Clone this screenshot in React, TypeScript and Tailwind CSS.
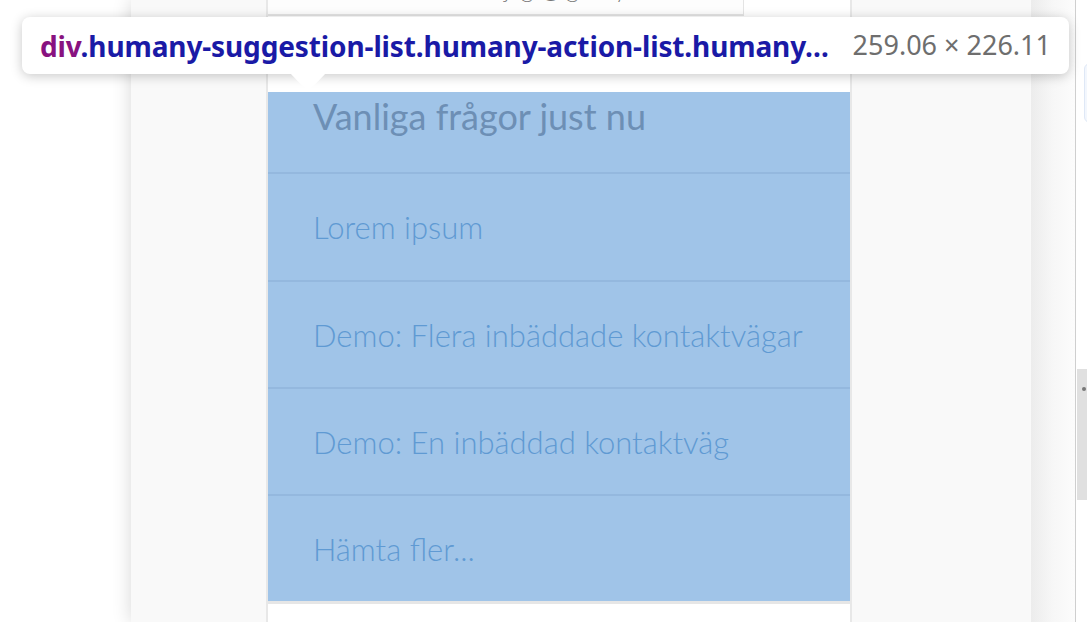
import React from "react";

export default function App() {
  const items = ["Lorem ipsum", "Demo: Flera inbäddade kontaktvägar", "Demo: En inbäddad kontaktväg", "Hämta fler..."];
  const heights = ["h-[108px]", "h-[107px]", "h-[107px]", "h-[105px]"];
  return (
    <div className="relative w-[1087px] h-[622px] overflow-hidden bg-white flex" style={{ fontFamily: "Lato, 'Noto Sans', sans-serif" }}>
      {/* left white area */}
      <div className="w-[131px] shrink-0 bg-white" />
      {/* main panel */}
      <div className="relative w-[900px] shrink-0 h-full bg-[#f9f9f9] shadow-[0_0_18px_rgba(0,0,0,0.16)] flex">
        <div className="w-[135px] shrink-0" />
        <div className="w-[586px] shrink-0 h-full bg-white border-x-2 border-[#e8e8e8] flex flex-col">
          <div className="h-[16px] w-[476px] overflow-hidden border-r border-b-2 border-[#e4e4e4] bg-[#fdfdfd] pl-[45px]">
            <div className="-mt-[25px] text-[24px] leading-[28px] text-[#777] font-light whitespace-nowrap">
              Skriv ditt ärende / jag @ gamly
            </div>
          </div>
          <div className="h-[76px]" />
          <div className="bg-[#a0c4e8] flex flex-col">
            <div className="h-[82px] pl-[45px] pt-[2px] border-b-2 border-[#94b8de]">
              <div className="text-[36px] leading-[44px] font-normal text-[#6d8fb5]">Vanliga frågor just nu</div>
            </div>
            {items.map((t, i) => (
              <div key={t} className={`${heights[i]} pl-[45px] flex items-center ${i < items.length - 1 ? "border-b-2 border-[#94b8de]" : ""}`}>
                <div className="text-[31px] leading-[36px] font-light text-[#5f9ad3]">{t}</div>
              </div>
            ))}
          </div>
          <div className="h-[3px] bg-[#e6e6e6]" />
          <div className="flex-1 bg-white" />
        </div>
      </div>
      {/* right area */}
      <div className="relative w-[44px] shrink-0 h-full bg-gradient-to-r from-[#ececec] via-[#f7f7f7] to-[#fcfcfc]" />
      <div className="w-[1px] shrink-0 h-full bg-[#cfcfcf]" />
      <div className="relative flex-1 h-full bg-white">
        <div className="absolute left-[8px] top-[63px] w-[20px] h-[60px] rounded-[6px] border border-[#dfe8f6] bg-[#f3f7fd]" />
        <div className="absolute left-[1px] top-[369px] w-[11px] h-[131px] bg-[#e0e0e0]">
          <div className="absolute left-[5px] top-[18px] w-[4px] h-[4px] rounded-full bg-[#777]" />
        </div>
      </div>

      {/* tooltip */}
      <div className="absolute left-[22px] top-[17px] w-[1047px] h-[57px] bg-white rounded-[8px] shadow-[0_2px_12px_rgba(0,0,0,0.22)] flex items-center pl-[18px] pr-[18px] justify-between" style={{ fontFamily: "'Noto Sans', 'Open Sans', sans-serif" }}>
        <div className="text-[28px] font-bold whitespace-nowrap tracking-[-0.12px]">
          <span className="text-[#881280]">div</span>
          <span className="text-[#1a1aa6]">.humany-suggestion-list.humany-action-list.humany…</span>
        </div>
        <div className="text-[27px] text-[#6e6e6e] whitespace-nowrap">259.06 × 226.11</div>
      </div>
      <div className="absolute left-[290px] top-[73px] w-0 h-0 border-l-[18px] border-r-[18px] border-t-[19px] border-l-transparent border-r-transparent border-t-white" />
    </div>
  );
}
